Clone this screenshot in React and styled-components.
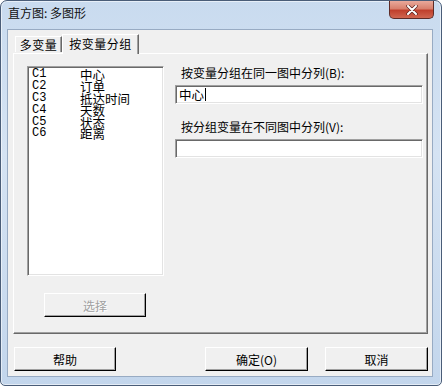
import React from 'react'
import styled, { createGlobalStyle, css } from 'styled-components'

const GlobalStyle = createGlobalStyle`
    html, body {
        margin: 0;
        padding: 0;
        background: #ffffff;
    }
    body {
        font-family: "Noto Sans CJK SC", "Liberation Sans", sans-serif;
        font-size: 12px;
        color: #000;
    }
`

const Window = styled.div`
    width: 442px;
    height: 386px;
    box-sizing: border-box;
    border: 1px solid #4a5d78;
    border-radius: 7px 7px 5px 5px;
    background: linear-gradient(180deg, #c9dbef 0%, #d5e3f3 40%, #c3d6ec 100%);
    box-shadow: inset 0 0 0 1px rgba(255, 255, 255, 0.55);
    display: flex;
    flex-direction: column;
    padding: 0 8px 8px 6px;
    overflow: hidden;
`

const TitleBar = styled.div`
    height: 28px;
    display: flex;
    justify-content: space-between;
    align-items: flex-start;
`

const Title = styled.div`
    margin: 4px 0 0 1px;
    font-size: 12px;
    line-height: 16px;
    color: #111;
`

const CloseButton = styled.div`
    width: 45px;
    height: 18px;
    margin-right: -1px;
    box-sizing: border-box;
    border: 1px solid #5e2c28;
    border-top: none;
    border-radius: 0 0 5px 5px;
    background: linear-gradient(180deg, #e9a99b 0%, #d8806d 45%, #c0402d 55%, #d06650 100%);
    display: flex;
    align-items: center;
    justify-content: center;
`

const Client = styled.div`
    flex: 1;
    background: #f0f0f0;
    border: 1px solid #98abc3;
    display: flex;
    flex-direction: column;
    padding: 4px 4px 0 5px;
`

const TabStrip = styled.div`
    display: flex;
    align-items: flex-end;
    height: 19px;
    padding-left: 2px;
    position: relative;
    z-index: 1;
`

const Tab = styled.div`
    box-sizing: border-box;
    height: 16px;
    padding: 0;
    width: ${p => p.w}px;
    border-top: 1px solid #ffffff;
    border-left: 1px solid #ffffff;
    border-right: 1px solid #696969;
    box-shadow: inset -1px 0 0 #a0a0a0;
    background: #f0f0f0;
    text-align: center;
    white-space: nowrap;
    letter-spacing: 0.5px;
    line-height: 15px;
    margin-bottom: 1px;

    ${p => p.active && css`
        height: 20px;
        margin-bottom: -1px;
        line-height: 17px;
    `}
`

const Panel = styled.div`
    height: 281px;
    box-sizing: border-box;
    border-top: 1px solid #ffffff;
    border-left: 1px solid #ffffff;
    border-right: 1px solid #696969;
    border-bottom: 1px solid #696969;
    box-shadow: inset -1px -1px 0 #a0a0a0;
    display: grid;
    grid-template-columns: 137px 248px;
    column-gap: 11px;
    padding: 12px 0 0 13px;
`

const LeftCol = styled.div`
    display: flex;
    flex-direction: column;
    align-items: flex-start;
`

const RightCol = styled.div`
    display: flex;
    flex-direction: column;
`

const sunken = css`
    box-sizing: border-box;
    background: #ffffff;
    border-top: 1px solid #a0a0a0;
    border-left: 1px solid #a0a0a0;
    border-right: 1px solid #ffffff;
    border-bottom: 1px solid #ffffff;
    box-shadow: inset 1px 1px 0 #696969, inset -1px -1px 0 #e3e3e3;
`

const ListBox = styled.div`
    ${sunken}
    width: 137px;
    height: 210px;
    padding: 2px 0 0 4px;
`

const ListRow = styled.div`
    display: grid;
    grid-template-columns: 48px 1fr;
    height: 11.9px;
    line-height: 11.9px;
    font-size: 12.5px;
    white-space: nowrap;
`

const ColId = styled.span`
    font-family: "Liberation Mono", "DejaVu Sans Mono", monospace;
    font-size: 12px;
`

const Button = styled.div`
    box-sizing: border-box;
    width: ${p => p.w}px;
    height: 24px;
    background: #f0f0f0;
    border-top: 1px solid #ffffff;
    border-left: 1px solid #ffffff;
    border-right: 1px solid #000000;
    border-bottom: 1px solid #000000;
    box-shadow: inset -1px -1px 0 #a0a0a0;
    display: flex;
    align-items: center;
    justify-content: center;
    font-size: 12px;
    color: ${p => (p.disabled ? '#a0a0a0' : '#000')};
    ${p => p.disabled && css`
        text-shadow: 1px 1px 0 #ffffff;
    `}
`

const SelectButton = styled(Button)`
    margin: 17px 0 0 17px;
`

const FieldLabel = styled.div`
    margin: ${p => p.top}px 0 0 6px;
    height: 14px;
    line-height: 14px;
    font-size: 12px;
    white-space: nowrap;
`

const TextBox = styled.div`
    ${sunken}
    margin-top: 5px;
    height: 19px;
    padding: 0 3px;
    display: flex;
    align-items: center;
    font-size: 12.5px;
    line-height: 15px;
`

const Caret = styled.span`
    display: inline-block;
    width: 1px;
    height: 13px;
    background: #000;
    margin-left: 1px;
`

const ButtonRow = styled.div`
    display: flex;
    align-items: center;
    margin-top: 13px;
    padding-left: 1px;
`

const Spacer = styled.div`
    flex: 1;
`

const Gap = styled.div`
    width: 17px;
`

const columns = [
    ['C1', '中心'],
    ['C2', '订单'],
    ['C3', '抵达时间'],
    ['C4', '天数'],
    ['C5', '状态'],
    ['C6', '距离'],
]

function App() {
    return (
        <>
            <GlobalStyle />
            <Window>
                <TitleBar>
                    <Title>直方图: 多图形</Title>
                    <CloseButton>
                        <svg width="12" height="10" viewBox="0 0 12 10">
                            <path d="M2 1 L10 9 M10 1 L2 9" stroke="#5a2320" strokeWidth="3.4" strokeLinecap="round" />
                            <path d="M2 1 L10 9 M10 1 L2 9" stroke="#ffffff" strokeWidth="2" strokeLinecap="round" />
                        </svg>
                    </CloseButton>
                </TitleBar>
                <Client>
                    <TabStrip>
                        <Tab w={47}>多变量</Tab>
                        <Tab w={77} active>按变量分组</Tab>
                    </TabStrip>
                    <Panel>
                        <LeftCol>
                            <ListBox>
                                {columns.map(([id, name]) => (
                                    <ListRow key={id}>
                                        <ColId>{id}</ColId>
                                        <span>{name}</span>
                                    </ListRow>
                                ))}
                            </ListBox>
                            <SelectButton w={102} disabled>选择</SelectButton>
                        </LeftCol>
                        <RightCol>
                            <FieldLabel top={0}>按变量分组在同一图中分列(B):</FieldLabel>
                            <TextBox>中心<Caret /></TextBox>
                            <FieldLabel top={16}>按分组变量在不同图中分列(V):</FieldLabel>
                            <TextBox />
                        </RightCol>
                    </Panel>
                    <ButtonRow>
                        <Button w={102}>帮助</Button>
                        <Spacer />
                        <Button w={103}>确定(O)</Button>
                        <Gap />
                        <Button w={103}>取消</Button>
                    </ButtonRow>
                </Client>
            </Window>
        </>
    )
}

export default App
